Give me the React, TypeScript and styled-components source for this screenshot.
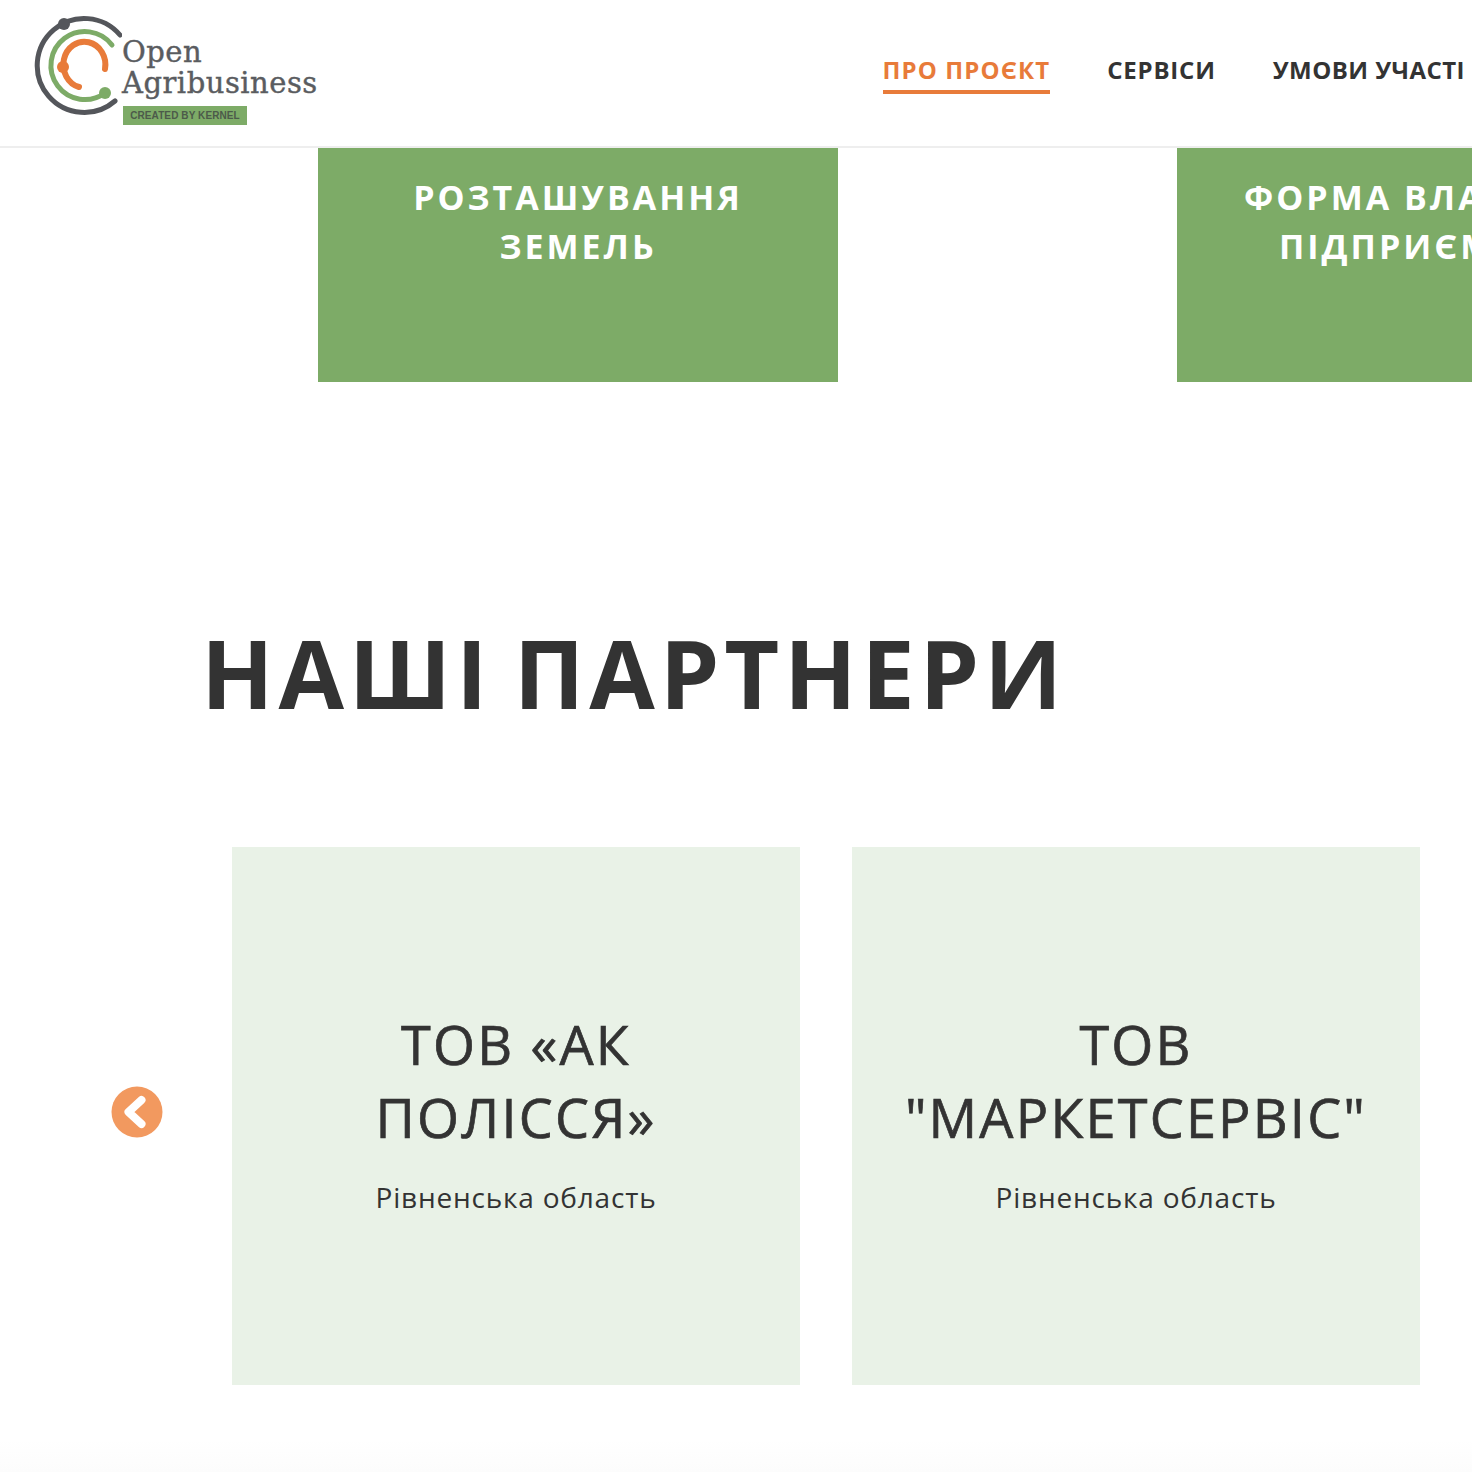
import styled, { createGlobalStyle } from 'styled-components';

const regions = ['РОЗТАШУВАННЯ ЗЕМЕЛЬ', 'ФОРМА ВЛАСНОСТІ ПІДПРИЄМСТВА'];
const partners = [
  { name: 'ТОВ «АК ПОЛІССЯ»', area: 'Рівненська область' },
  { name: 'ТОВ "МАРКЕТСЕРВІС"', area: 'Рівненська область' },
];

function App() {
  return (
    <Page>
      <GlobalStyle />
      <Header>
        <Logo href="#">
          <svg width="92" height="110" viewBox="30 10 92 110" fill="none" strokeLinecap="round">
            <path d="M120 35A47 47 0 1 0 115 101" stroke="#54565b" strokeWidth="5" />
            <circle cx="64" cy="24" r="6" fill="#54565b" />
            <path d="M112 45A34 34 0 1 0 105 93" stroke="#7dab67" strokeWidth="5" />
            <circle cx="105" cy="93" r="6" fill="#7dab67" />
            <path d="M105 69A21 23 0 1 0 79 87" stroke="#e87b3a" strokeWidth="6" />
            <circle cx="63" cy="67" r="6" fill="#e87b3a" />
          </svg>
          <LogoText>
            <LogoName>Open</LogoName>
            <LogoName>Agribusiness</LogoName>
            <LogoBadge>CREATED BY KERNEL</LogoBadge>
          </LogoText>
        </Logo>
        <Nav>
          <NavLink href="#" $active $track={1.1}>ПРО ПРОЄКТ</NavLink>
          <NavLink href="#" $track={0.8}>СЕРВІСИ</NavLink>
          <NavLink href="#" $track={0.45}>УМОВИ УЧАСТІ</NavLink>
        </Nav>
      </Header>

      <Regions>
        {regions.map((region) => (
          <RegionCard key={region}>
            <RegionTitle>{region}</RegionTitle>
          </RegionCard>
        ))}
      </Regions>

      <PartnersTitle>НАШІ ПАРТНЕРИ</PartnersTitle>

      <Slider>
        <ArrowButton aria-label="Назад">
          <svg width="52" height="52" viewBox="0 0 52 52" fill="none">
            <circle cx="26" cy="26" r="25.5" fill="#f2995f" />
            <path d="M30.5 14 17.5 26l13 12" stroke="#fff" strokeWidth="8" strokeLinecap="round" strokeLinejoin="round" />
          </svg>
        </ArrowButton>
        {partners.map((partner) => (
          <PartnerCard key={partner.name}>
            <PartnerName>{partner.name}</PartnerName>
            <PartnerArea>{partner.area}</PartnerArea>
          </PartnerCard>
        ))}
      </Slider>
    </Page>
  );
}

const GlobalStyle = createGlobalStyle`
  html, body {
    margin: 0;
    padding: 0;
    background: #fff;
    overflow: hidden;
  }
  * {
    box-sizing: border-box;
  }
`;
const Page = styled.div`
  width: 1472px;
  height: 1472px;
  overflow: hidden;
  color: #333;
  background: linear-gradient(to bottom, #fff 1440px, #fcfcfc);
  font-family: 'Open Sans', 'Noto Sans', sans-serif;
`;
const Header = styled.header`
  display: flex;
  align-items: flex-start;
  justify-content: space-between;
  height: 148px;
  padding: 10px 7px 0 30px;
  border-bottom: 2px solid #eeeeee;
`;
const Logo = styled.a`
  display: flex;
  text-decoration: none;
`;
const LogoText = styled.div`
  display: flex;
  flex-direction: column;
  padding-top: 27px;
`;
const LogoName = styled.span`
  height: 31px;
  font-family: 'DejaVu Serif', serif;
  font-size: 29px;
  line-height: 31px;
  letter-spacing: 0.5px;
  -webkit-text-stroke: 0.4px #5a5c60;
  color: #5a5c60;
  white-space: nowrap;
`;
const LogoBadge = styled.span`
  width: 124px;
  height: 19px;
  margin: 7px 0 0 1px;
  background: #7dab67;
  color: #4c5a4a;
  font-family: 'Liberation Sans', sans-serif;
  font-size: 10px;
  font-weight: 700;
  line-height: 19px;
  text-align: center;
  letter-spacing: 0.1px;
`;
const Nav = styled.nav`
  display: flex;
  gap: 57px;
  padding-top: 44px;
`;
const NavLink = styled.a<{ $active?: boolean; $track: number }>`
  height: 40px;
  border-bottom: 4px solid ${(props) => (props.$active ? '#e87b3a' : 'transparent')};
  color: ${(props) => (props.$active ? '#e87b3a' : '#333')};
  font-size: 24px;
  font-weight: 700;
  line-height: 31px;
  letter-spacing: ${(props) => props.$track}px;
  text-decoration: none;
  white-space: nowrap;
`;
const Regions = styled.section`
  display: flex;
  gap: 339px;
  padding-left: 318px;
`;
const RegionCard = styled.div`
  flex: none;
  width: 520px;
  height: 234px;
  padding: 25px 60px 0;
  background: #7dab67;
`;
const RegionTitle = styled.h3`
  margin: 0;
  color: #fff;
  font-size: 34px;
  font-weight: 700;
  line-height: 49px;
  letter-spacing: 3px;
  text-align: center;
`;
const PartnersTitle = styled.h2`
  margin: 228px 0 0;
  padding-left: 201px;
  height: 237px;
  color: #333;
  font-size: 95px;
  font-weight: 700;
  line-height: 125px;
  letter-spacing: 4.8px;
  word-spacing: -8px;
  white-space: nowrap;
`;
const Slider = styled.section`
  position: relative;
  display: flex;
  gap: 52px;
  padding-left: 232px;
`;
const ArrowButton = styled.button`
  position: absolute;
  left: 111px;
  top: 239px;
  width: 52px;
  height: 52px;
  padding: 0;
  border: 0;
  background: none;
  svg {
    display: block;
  }
`;
const PartnerCard = styled.article`
  display: flex;
  flex-direction: column;
  align-items: center;
  justify-content: center;
  flex: none;
  width: 568px;
  height: 538px;
  padding: 0 40px 7px;
  background: #e9f2e7;
  text-align: center;
`;
const PartnerName = styled.h4`
  margin: 0;
  font-size: 54px;
  font-weight: 400;
  line-height: 73px;
  letter-spacing: 2.2px;
  -webkit-text-stroke: 0.7px #333;
`;
const PartnerArea = styled.p`
  margin: 23px 0 0;
  font-size: 28px;
  line-height: 40px;
  letter-spacing: 0.8px;
`;

export default App;
